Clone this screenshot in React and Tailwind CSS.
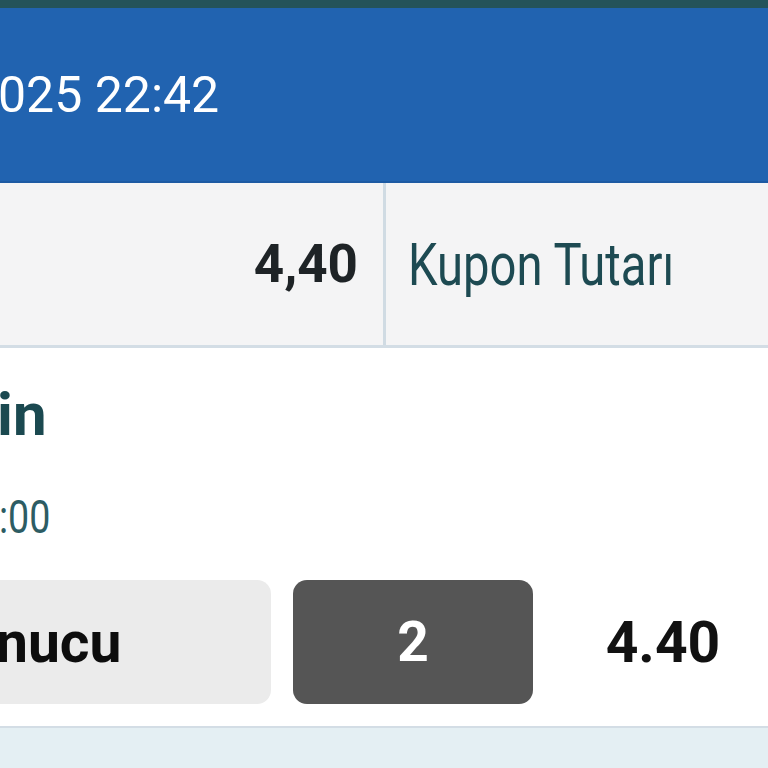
export default function App() {
  return (
    <div className="w-[768px] h-[768px] overflow-hidden bg-[#e4eff3] font-['Roboto',_'Liberation_Sans',_sans-serif]">
      <div className="h-2 bg-[#24535a]" />
      <Header />
      <TotalsRow />
      <SelectionCard />
    </div>
  );
}

function Header() {
  return (
    <div className="flex h-[175px] items-center border-b-2 border-[#1d5aa3] bg-[#2163b0]">
      <span className="-ml-[2px] whitespace-nowrap text-[50px] leading-none text-white">025 22:42</span>
    </div>
  );
}

function TotalsRow() {
  return (
    <div className="flex h-[165px] border-b-[3px] border-[#d3dde5] bg-[#f4f4f5]">
      <div className="flex w-[386px] items-center justify-end border-r-[3px] border-[#d0dbe3] pr-[25px]">
        <span className="text-[53px] font-bold leading-none text-[#1e2326]">4,40</span>
      </div>
      <div className="flex flex-1 items-center pl-[22px]">
        <span className="inline-block origin-left scale-x-[0.8] whitespace-nowrap text-[59px] leading-none text-[#1d4a52]">
          Kupon Tutarı
        </span>
      </div>
    </div>
  );
}

function SelectionCard() {
  return (
    <div className="flex flex-col border-b-2 border-[#d3dde5] bg-white pb-[22px] pt-[37px]">
      <span className="-ml-[3px] text-[60px] font-bold leading-none text-[#1b4950]">in</span>
      <span className="mt-[48px] -ml-[1px] inline-block origin-left scale-x-[0.8] whitespace-nowrap text-[47px] leading-none text-[#2d5c63]">
        :00
      </span>
      <div className="mt-[40px] flex items-center gap-[22px]">
        <div className="flex h-[124px] w-[271px] shrink-0 items-center rounded-r-[14px] bg-[#ebebeb]">
          <span className="-ml-[4px] text-[57px] font-bold leading-none text-[#0d0d0d]">nucu</span>
        </div>
        <div className="flex h-[124px] w-[240px] shrink-0 items-center justify-center rounded-[14px] bg-[#555555]">
          <span className="text-[55px] font-bold leading-none text-white">2</span>
        </div>
        <div className="flex w-[216px] shrink-0 items-center justify-center">
          <span className="text-[57px] font-bold leading-none text-[#111111]">4.40</span>
        </div>
      </div>
    </div>
  );
}
